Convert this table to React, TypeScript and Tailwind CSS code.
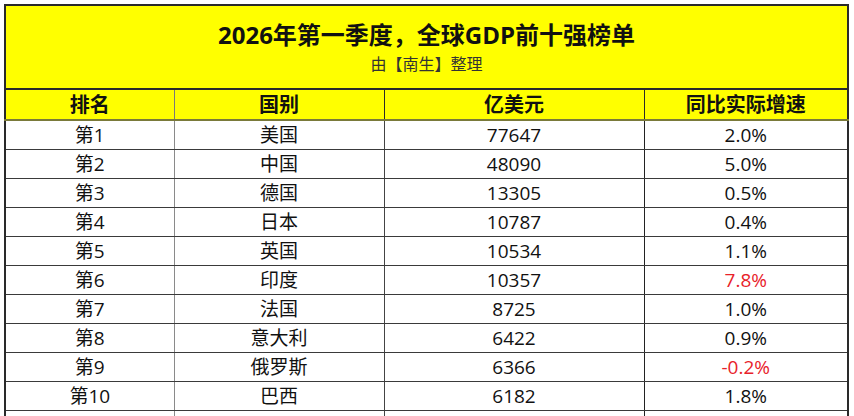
import React from "react";

const rows: [string, string, string, string, boolean][] = [
  ["第1", "美国", "77647", "2.0%", false],
  ["第2", "中国", "48090", "5.0%", false],
  ["第3", "德国", "13305", "0.5%", false],
  ["第4", "日本", "10787", "0.4%", false],
  ["第5", "英国", "10534", "1.1%", false],
  ["第6", "印度", "10357", "7.8%", true],
  ["第7", "法国", "8725", "1.0%", false],
  ["第8", "意大利", "6422", "0.9%", false],
  ["第9", "俄罗斯", "6366", "-0.2%", true],
  ["第10", "巴西", "6182", "1.8%", false],
  ["", "", "", "", false],
];

export default function App() {
  return (
    <div
      className="w-[854px] h-[416px] overflow-hidden bg-white pl-[4px] pt-[4px]"
      style={{ fontFamily: '"Open Sans", "Noto Sans CJK SC", sans-serif' }}
    >
      <table className="border-collapse table-fixed w-[843px] text-[#111]">
        <colgroup>
          <col className="w-[169px]" />
          <col className="w-[210px]" />
          <col className="w-[260px]" />
          <col className="w-[204px]" />
        </colgroup>
        <tbody>
          <tr className="h-[84px]">
            <td colSpan={4} className="bg-[#ffff00] border-2 border-[#2a2a2a] text-center align-top p-0">
              <div className="flex flex-col items-center pt-[14px]">
                <div className="text-[24px] leading-[30px] font-bold text-[#111]">
                  2026年第一季度，全球GDP前十强榜单
                </div>
                <div className="text-[16px] leading-[20px] text-[#333] mt-[4px]">由【南生】整理</div>
              </div>
            </td>
          </tr>
          <tr className="h-[31px] bg-[#ffff00]">
            {["排名", "国别", "亿美元", "同比实际增速"].map((h, i) => (
              <td
                key={h}
                className={`border-x border-b-2 border-b-[#7a7a3a] text-center align-middle p-0 text-[20px] leading-[26px] font-bold ${
                  i === 0 ? "border-l-2 border-l-[#2a2a2a] border-r-[#7a7a7a]" : i === 3 ? "border-r-2 border-r-[#2a2a2a] border-l-[#2a2a2a]" : "border-x-[#2a2a2a]"
                }`}
              >
                {h}
              </td>
            ))}
          </tr>
          {rows.map((r, ri) => (
            <tr key={ri} className="h-[29px]">
              {r.slice(0, 4).map((c, i) => (
                <td
                  key={i}
                  className={`border border-t-[#3a3a3a] border-b-[#3a3a3a] text-center align-middle p-0 text-[19px] leading-[24px] ${
                    i === 0
                      ? "border-l-2 border-l-[#2a2a2a] border-r-[#8a8a8a]"
                      : i === 1
                      ? "border-l-[#8a8a8a] border-r-[#444]"
                      : i === 3
                      ? "border-r-2 border-r-[#2a2a2a] border-l-[#222]"
                      : "border-x-[#222]"
                  } ${i === 3 && r[4] ? "text-[#e8222a]" : ""}`}
                >
                  {c}
                </td>
              ))}
            </tr>
          ))}
        </tbody>
      </table>
    </div>
  );
}
